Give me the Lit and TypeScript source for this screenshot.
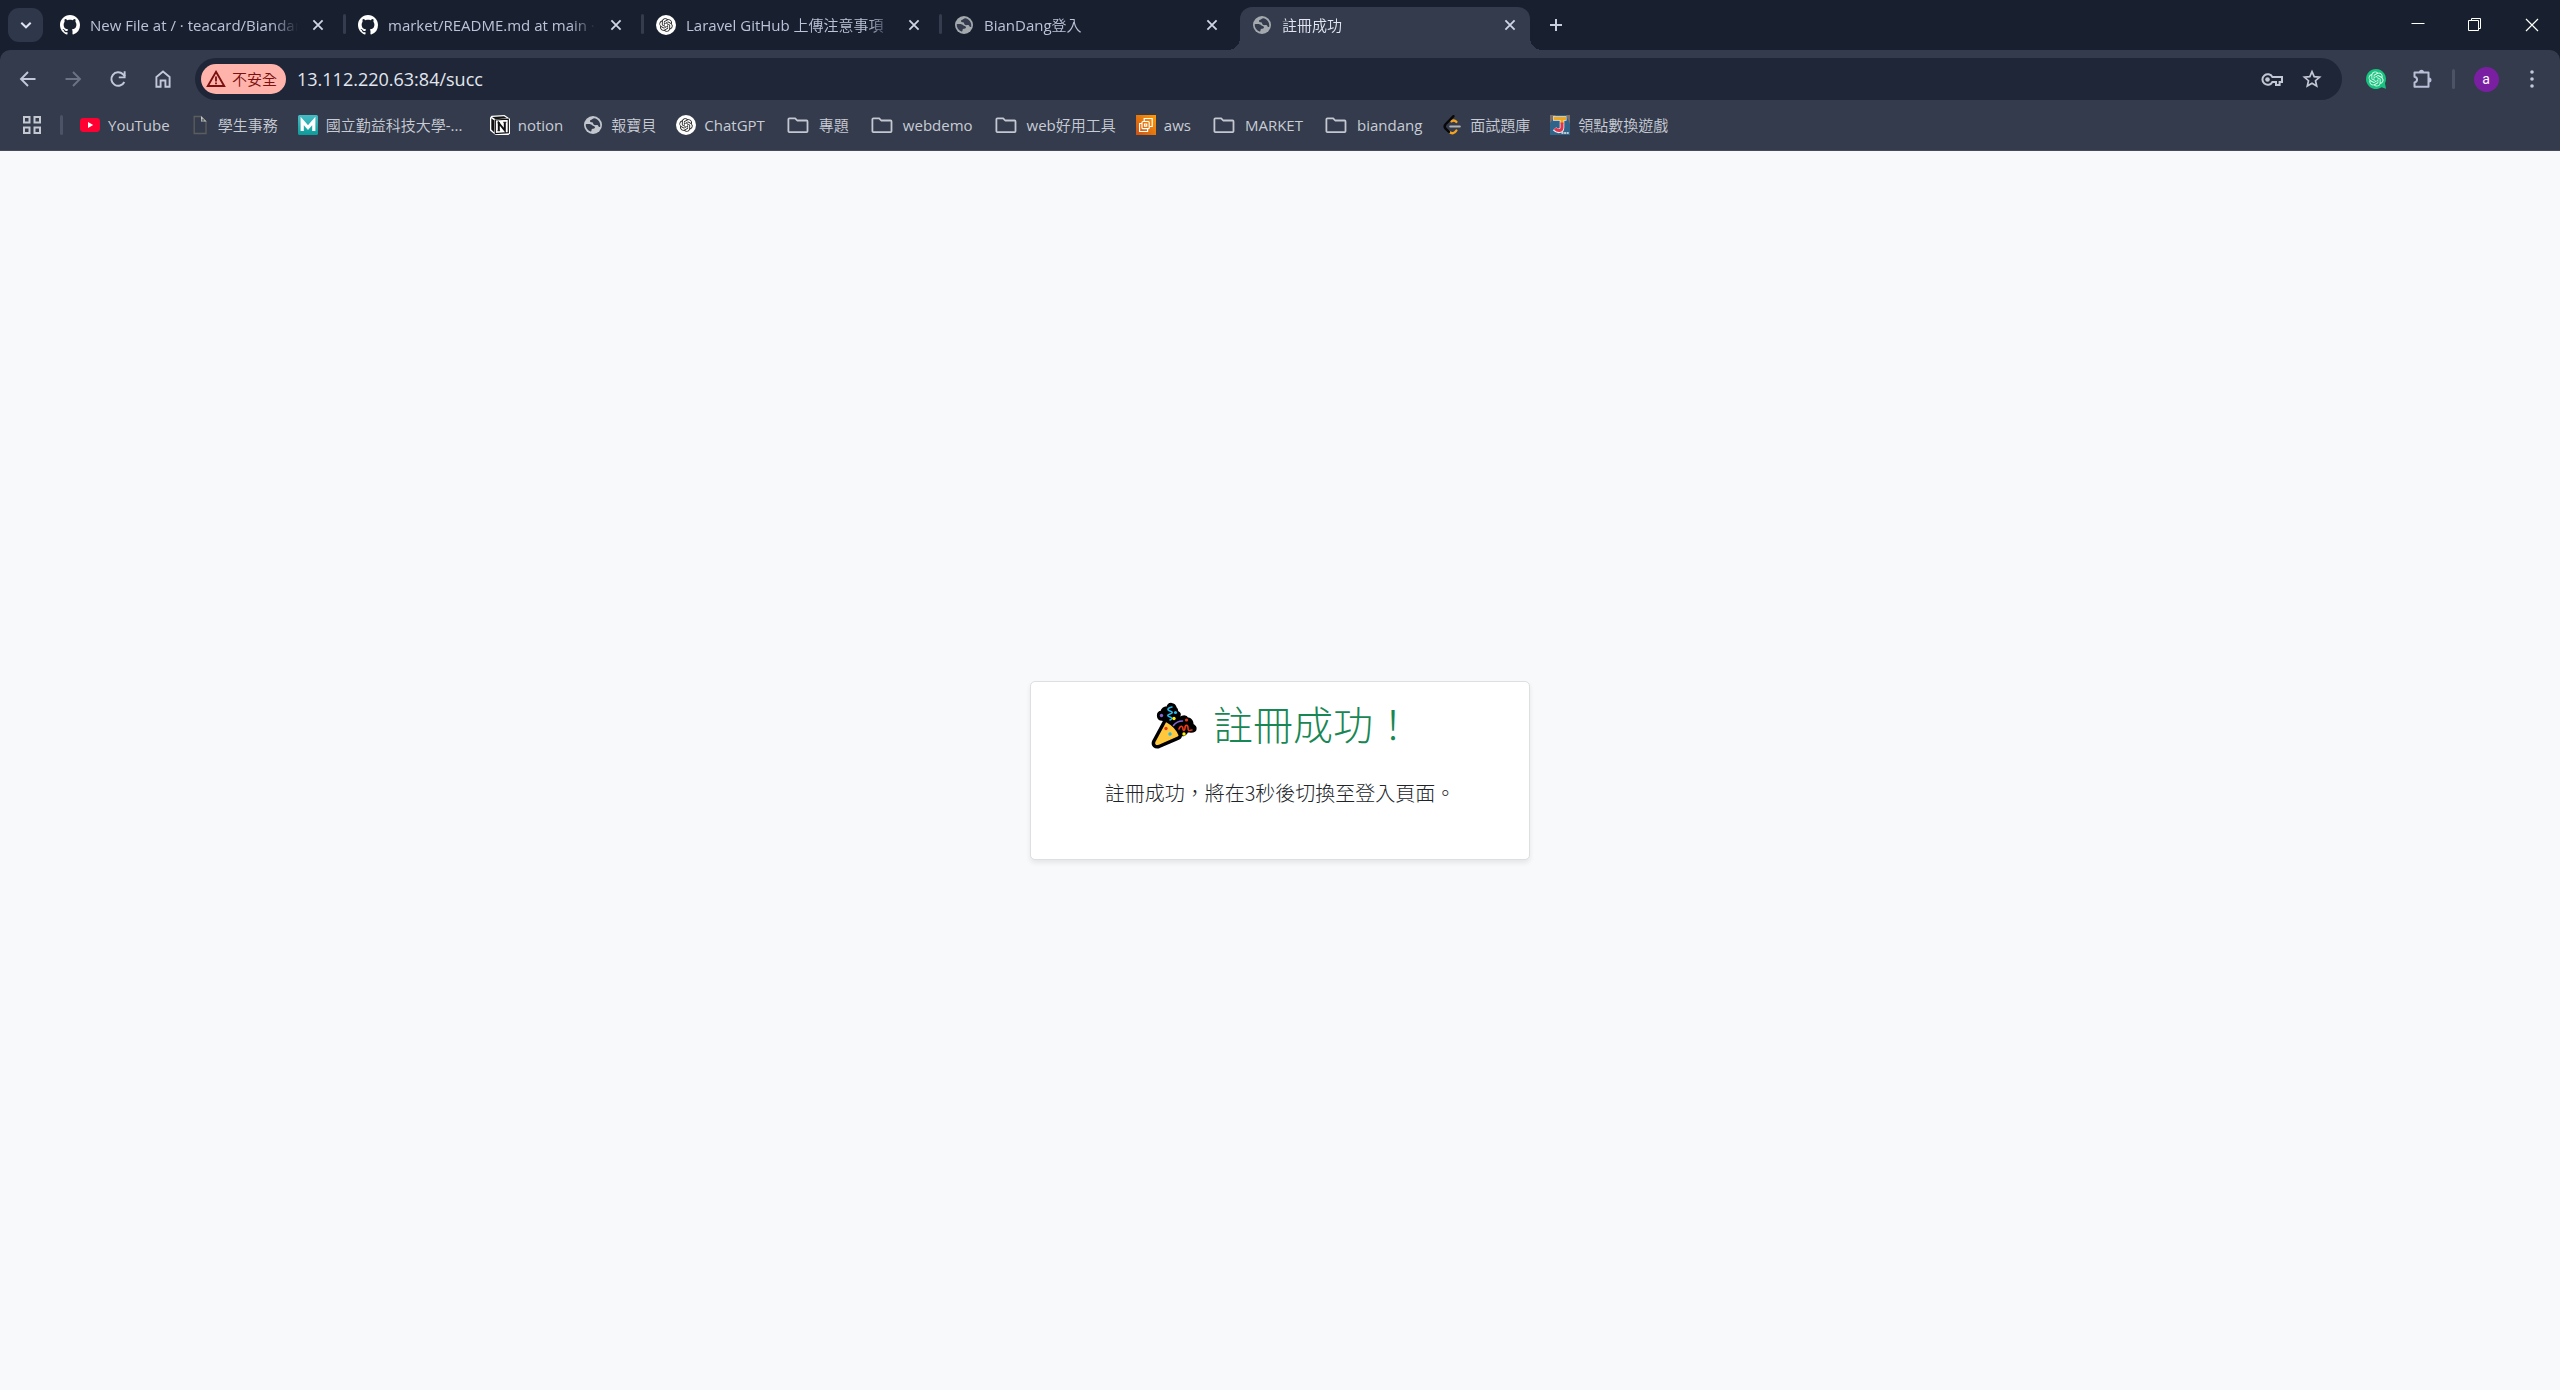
import { LitElement, html, svg, css } from "lit";
import { customElement, property } from "lit/decorators.js";

const OPENAI =
  "M22.2819 9.8211a5.9847 5.9847 0 0 0-.5157-4.9108 6.0462 6.0462 0 0 0-6.5098-2.9A6.0651 6.0651 0 0 0 4.9807 4.1818a5.9847 5.9847 0 0 0-3.9977 2.9 6.0462 6.0462 0 0 0 .7427 7.0966 5.98 5.98 0 0 0 .511 4.9107 6.051 6.051 0 0 0 6.5146 2.9001A5.9847 5.9847 0 0 0 13.2599 24a6.0557 6.0557 0 0 0 5.7718-4.2058 5.9894 5.9894 0 0 0 3.9977-2.9001 6.0557 6.0557 0 0 0-.7475-7.0729zm-9.022 12.6081a4.4755 4.4755 0 0 1-2.8764-1.0408l.1419-.0804 4.7783-2.7582a.7948.7948 0 0 0 .3927-.6813v-6.7369l2.02 1.1686a.071.071 0 0 1 .038.052v5.5826a4.504 4.504 0 0 1-4.4945 4.4944zm-9.6607-4.1254a4.4708 4.4708 0 0 1-.5346-3.0137l.142.0852 4.783 2.7582a.7712.7712 0 0 0 .7806 0l5.8428-3.3685v2.3324a.0804.0804 0 0 1-.0332.0615L9.74 19.9502a4.4992 4.4992 0 0 1-6.1408-1.6464zM2.3408 7.8956a4.485 4.485 0 0 1 2.3655-1.9728V11.6a.7664.7664 0 0 0 .3879.6765l5.8144 3.3543-2.0201 1.1685a.0757.0757 0 0 1-.071 0l-4.8303-2.7865A4.504 4.504 0 0 1 2.3408 7.872zm16.5963 3.8558L13.1038 8.364 15.1192 7.2a.0757.0757 0 0 1 .071 0l4.8303 2.7913a4.4944 4.4944 0 0 1-.6765 8.1042v-5.6772a.79.79 0 0 0-.407-.667zm2.0107-3.0231l-.142-.0852-4.7735-2.7818a.7759.7759 0 0 0-.7854 0L9.409 9.2297V6.8974a.0662.0662 0 0 1 .0284-.0615l4.8303-2.7866a4.4992 4.4992 0 0 1 6.6802 4.66zM8.3065 12.863l-2.02-1.1638a.0804.0804 0 0 1-.038-.0567V6.0742a4.4992 4.4992 0 0 1 7.3757-3.4537l-.142.0805L8.704 5.459a.7948.7948 0 0 0-.3927.6813zm1.0976-2.3654l2.602-1.4998 2.6069 1.4998v2.9994l-2.5974 1.4997-2.6067-1.4997Z";

const GITHUB =
  "M8 0C3.58 0 0 3.58 0 8c0 3.54 2.29 6.53 5.47 7.59.4.07.55-.17.55-.38 0-.19-.01-.82-.01-1.49-2.01.37-2.53-.49-2.69-.94-.09-.23-.48-.94-.82-1.13-.28-.15-.68-.52-.01-.53.63-.01 1.08.58 1.23.82.72 1.21 1.87.87 2.33.66.07-.52.28-.87.51-1.07-1.78-.2-3.64-.89-3.64-3.95 0-.87.31-1.59.82-2.15-.08-.2-.36-1.02.08-2.12 0 0 .67-.21 2.2.82.64-.18 1.32-.27 2-.27.68 0 1.36.09 2 .27 1.53-1.04 2.2-.82 2.2-.82.44 1.1.16 1.92.08 2.12.51.56.82 1.27.82 2.15 0 3.07-1.87 3.75-3.65 3.95.29.25.54.73.54 1.48 0 1.07-.01 1.93-.01 2.2 0 .21.15.46.55.38A8.013 8.013 0 0016 8c0-4.42-3.58-8-8-8z";

/* Every icon is drawn on a 20 x 20 grid. */
const ICONS: Record<string, unknown> = {
  github: svg`<path transform="scale(1.25)" fill="#fff" d=${GITHUB}/>`,
  openai: svg`<circle cx="10" cy="10" r="10" fill="#fff"/><path transform="translate(3.2 3.2) scale(.567)" fill="#222" d=${OPENAI}/>`,
  openaiGreen: svg`<path fill="#16c47f" d="M10 0a10 10 0 1 0 5.6 18.3l4.4 1.5-1-5.5A10 10 0 0 0 10 0z"/><path transform="translate(2.4 2.4) scale(.633)" fill="#d9f7ea" d=${OPENAI}/>`,
  globe: svg`<circle cx="10" cy="10" r="9" fill="currentColor"/><path fill="#333b4c" d="M11.6 3.2c-.9.1-1.7.4-2.5 1-.9.6-2 .7-2.1 1.700-.1.900.8 1.300 1.900 1.300 1.200.1 1.100.7 1.300 1.600.3 1.100 1.500 1.500 2.600 1.300 1.600-.3 2.300.2 2.600 1.100.3.700 1.200.9 1.800.5.600-3.900-1.500-7.300-5.600-8.500zM2.700 9.300c1.400-.3 3.600-.4 5.300.1 1.100.3 1.500 1.200 2.600 1.500 1 .3 1.600.9 1.300 1.900-.3.900-1.300 1-2.300 1-.9.1-1 .8-1.100 1.600-.1.700-.4 1.200-1.100 1.100-3.200-1.200-4.900-4-4.700-7.200z"/>`,
  youtube: svg`<rect y="3" width="20" height="14" rx="3.4" fill="#ff0033"/><path fill="#fff" d="M8 7v6l5.200-3z"/>`,
  file: svg`<path fill="none" stroke="#5c5d5c" stroke-width="1.3" d="M4.200 1.500h6.800l5 5v12H4.200z"/><path fill="#c6c8cc" d="M11 1l5.600 5.600H11z"/><path stroke="#5c5d5c" d="M13 3.500v3M11.500 5h3"/>`,
  m: svg`<defs><linearGradient id="g" x2="0" y2="1"><stop stop-color="#46bcc4"/><stop offset="1" stop-color="#0c9c9a"/></linearGradient></defs><rect width="20" height="20" rx="1.5" fill="url(#g)"/><path fill="none" stroke="#fff" stroke-width="3.2" d="M4.200 16V6l5.800 6.500L15.800 6v10"/>`,
  notion: svg`<path fill="#fff" d="M1.500.8 14.500 0 20 3.800v14.500L18.500 20l-13 .0L0 15.500V2.500z"/><path fill="#111" d="M2 2l12-.8 3 2L5.500 4.200zM1.300 3.200l3 2.200v12L1.300 14.500z"/><path fill="#fff" stroke="#111" stroke-width="1.2" d="M5.300 5l13-.8v13.400l-13 1z"/><path fill="none" stroke="#111" stroke-width="2" d="M8.800 15.500V8l6 7.500V7.500"/><path stroke="#111" d="M7.500 7.800h2.500M13.300 7.300h3M7.500 15.700h2.600"/>`,
  folder: svg`<path fill="none" stroke="#c5c7d1" stroke-width="1.8" stroke-linejoin="round" d="M.4 4.300c0-.6.4-1 1-1h5.800l2 2.200h9.400c.5 0 .9.400.9.900v9.800c0 .5-.4.900-.9.900H1.400c-.6 0-1-.4-1-.9z"/>`,
  aws: svg`<defs><linearGradient id="w" x1="0" y1="1" x2="1" y2="0"><stop stop-color="#cb5216"/><stop offset="1" stop-color="#ff9c05"/></linearGradient></defs><rect width="20" height="20" fill="url(#w)"/><g fill="none" stroke="#fff" stroke-width="1.2"><path d="M8.200 6V3.500h8V11.500h-2.500"/><rect x="6" y="6.500" width="7.200" height="7.200" rx="1"/><path d="M6 8.500H3.600v8h8V14"/><path d="M8.500 9h2.200v2.200H8.500z"/></g>`,
  leetcode: svg`<g fill="none" stroke-linecap="round"><path stroke="#f5a21d" stroke-width="2.4" d="M9.500 6.200c1.800-1.400 3.300-1 4.900.7M14.400 15.500c-1.600 2.800-4.600 3.600-7 1.400"/><path stroke="#080808" stroke-width="2.4" d="M11.500 1.200 3.600 9.200c-1.200 1.400-1.200 3.200 0 4.500l3.400 3.200"/><path stroke="#b3b3b3" stroke-width="2" d="M8.200 11.600h9.600"/></g>`,
  game: svg`<rect width="20" height="20" fill="#2f6389"/><path fill="#7a6f6c" d="M0 0h6L0 8zM16 0h4v9z"/><path fill="none" stroke="#e8edf2" stroke-width="4.6" d="M3 3.500h13.500M12 3v9.500c0 4-4.500 4.500-7.500 1.200"/><path fill="none" stroke="#f3a81c" stroke-width="3" d="M3.500 3.400H16M12 3v6"/><path fill="none" stroke="#e2344a" stroke-width="3" d="M12 7.500v5c0 3.500-4 4-7 1.200"/><path stroke="#e9eef2" stroke-width="1.5" stroke-dasharray="2 .6" d="M11.500 18h7.500"/>`,
  grid: svg`<g fill="none" stroke="#c5c7d1" stroke-width="2"><path d="M2 2h5.500v5.500H2zM12.500 2H18v5.500h-5.500zM2 12.500h5.500V18H2zM12.500 12.500H18V18h-5.500z"/></g>`,
  back: svg`<path fill="none" stroke="#c3c7da" stroke-width="1.9" d="M17.500 10H3.500M10 3 3 10l7 7"/>`,
  forward: svg`<path fill="none" stroke="#6c7385" stroke-width="1.9" d="M2.500 10h14M10 3l7 7-7 7"/>`,
  reload: svg`<path fill="none" stroke="#c3c7da" stroke-width="2" d="M16.300 13A6.800 6.800 0 1 1 15 5.200l2 2"/><path fill="#c3c7da" d="M17.600 2.300v7H10.800v-1.900h4.900V2.300z"/>`,
  home: svg`<path fill="none" stroke="#c3c7da" stroke-width="1.9" d="M3.400 8 10 2.600 16.600 8v9.800H12.400v-6.300H7.600v6.300H3.400z"/>`,
  warning: svg`<path fill="none" stroke="#7a1010" stroke-width="1.9" stroke-linejoin="miter" d="M10 2.800 18.200 17H1.800z"/><path fill="#7a1010" d="M9.100 7.500h1.800v5H9.100zM9.100 13.500h1.800v1.800H9.100z"/>`,
  key: svg`<g fill="none" stroke="#c3c7d3" stroke-width="2"><path d="M11.400 8A5.300 5.300 0 1 0 11.400 13H15v3h3.600v-3H21V8z"/></g><circle cx="6.500" cy="10.500" r="2.300" fill="#c3c7d3"/>`,
  star: svg`<path fill="none" stroke="#c3c7d3" stroke-width="1.7" d="m10 2.600 2.200 5 5.400.5-4.100 3.600 1.200 5.300-4.700-2.800L5.300 17l1.200-5.300L2.400 8.100l5.400-.5z"/>`,
  puzzle: svg`<path fill="none" stroke="#b9bfd6" stroke-width="2" stroke-linejoin="round" d="M2.500 3.500h14v14.200h-14v-4.200c3.400-.6 3.400-5.200 0-5.800z"/><path fill="#b9bfd6" d="M7 3.200a2.500 2.500 0 0 1 5 0zM17 8.500a2.500 2.500 0 0 1 0 5z"/>`,
  more: svg`<g fill="#c3c7da"><circle cx="10" cy="3" r="1.8"/><circle cx="10" cy="10" r="1.8"/><circle cx="10" cy="17" r="1.8"/></g>`,
  chevron: svg`<path fill="none" stroke="#dfe3f0" stroke-width="2" d="M5.300 7.700 10 12.300l4.700-4.600"/>`,
  close: svg`<path stroke="#d0d5e6" stroke-width="1.8" d="m5.400 5.400 9.200 9.200M14.600 5.400l-9.200 9.200"/>`,
  plus: svg`<path stroke="#c8cde0" stroke-width="2" d="M10 4v12M4 10h12"/>`,
  minimise: svg`<path stroke="#fff" d="M3.500 8.500h13"/>`,
  restore: svg`<path fill="none" stroke="#fff" d="M3.500 5.500h10v10h-10zM6.500 5.500v-2h9v10h-2"/>`,
  exit: svg`<path stroke="#fff" stroke-width="1.2" d="m4 4 12 12M16 4 4 16"/>`,
};

@customElement("ui-icon")
class UiIcon extends LitElement {
  static styles = css`
    :host { display: block; flex: none; width: 20px; height: 20px; }
    .icon { display: block; width: 100%; height: 100%; overflow: visible; }
  `;
  @property() name = "";
  render() {
    return html`<svg class="icon" viewBox="0 0 20 20" aria-hidden="true">${ICONS[this.name]}</svg>`;
  }
}

/* Chinese runs are weighted lighter than the Latin ones. */
const mixed = (text: string) =>
  text
    .split(/([\u3000-\u9fff\uff00-\uffef]+)/)
    .filter(Boolean)
    .map((run) => (/[\u3000-\u9fff]/.test(run) ? html`<span class="han">${run}</span>` : html`<span>${run}</span>`));

const TABS = [
  { icon: "github", title: "New File at / · teacard/Biandang" },
  { icon: "github", title: "market/README.md at main · teacard/market" },
  { icon: "openai", title: "Laravel GitHub 上傳注意事項" },
  { icon: "globe", title: "BianDang登入" },
  { icon: "globe", title: "註冊成功" },
];
const ACTIVE = 4;

const BOOKMARKS = [
  ["youtube", "YouTube"],
  ["file", "學生事務"],
  ["m", "國立勤益科技大學-..."],
  ["notion", "notion"],
  ["globe", "報寶貝"],
  ["openai", "ChatGPT"],
  ["folder", "專題"],
  ["folder", "webdemo"],
  ["folder", "web好用工具"],
  ["aws", "aws"],
  ["folder", "MARKET"],
  ["folder", "biandang"],
  ["leetcode", "面試題庫"],
  ["game", "領點數換遊戲"],
];

@customElement("app-root")
class AppRoot extends LitElement {
  static styles = css`
    :host {
      display: flex;
      flex-direction: column;
      min-height: 100vh;
      background: #f8f9fa;
      font-family: "Open Sans", "Noto Sans CJK TC", sans-serif;
      font-size: 15px;
      line-height: 20px;
    }
    * { box-sizing: border-box; }
    button, input {
      margin: 0;
      padding: 0;
      border: 0;
      background: none;
      color: inherit;
      font: inherit;
    }
    button { display: flex; align-items: center; justify-content: center; }
    a { color: inherit; text-decoration: none; }
    .han { font-family: "Noto Sans CJK TC", sans-serif; font-weight: 350; }

    .strip {
      display: flex;
      align-items: center;
      height: 50px;
      padding-left: 8px;
      background: #182030;
      color: #bcc3d8;
    }
    .search {
      width: 35px;
      height: 34px;
      border-radius: 11px;
      background: #2f384a;
    }
    .tabs { display: flex; align-self: flex-end; gap: 8px; margin-left: 5px; }
    .tab {
      position: relative;
      display: flex;
      align-items: center;
      gap: 10px;
      width: 290px;
      height: 43px;
      padding: 0 10px 7px 12px;
      border-radius: 12px 12px 0 0;
    }
    .tab ui-icon { color: #a4a9ae; }
    .tab.split::after {
      content: "";
      position: absolute;
      right: -8px;
      top: 7px;
      width: 3px;
      height: 20px;
      border-radius: 2px;
      background: #343c4e;
    }
    .tab.active { background: #333b4c; color: #e3e6f0; }
    .tab.active::before, .tab.active::after {
      content: "";
      position: absolute;
      bottom: 0;
      width: 12px;
      height: 12px;
    }
    .tab.active::before { right: 100%; background: radial-gradient(circle at 0 0, transparent 12px, #333b4c 12px); }
    .tab.active::after { left: 100%; background: radial-gradient(circle at 100% 0, transparent 12px, #333b4c 12px); }
    .title {
      flex: 1;
      min-width: 0;
      overflow: hidden;
      justify-content: flex-start;
      white-space: pre;
      mask-image: linear-gradient(to left, transparent, #000 26px);
    }
    .add { width: 36px; height: 36px; margin-left: 8px; }
    .window { display: flex; align-self: stretch; margin-left: auto; }
    .window button { width: 57px; }

    .frame { background: #182030; }
    .chrome { border-radius: 10px 10px 0 0; background: #333b4c; border-bottom: 1px solid #464b59; color: #c9ccd5; }
    .toolbar { display: flex; align-items: center; padding: 8px 5px 0; }
    .nav { display: flex; margin-right: 10px; }
    .nav button { width: 45px; height: 42px; }
    .address {
      flex: 1;
      display: flex;
      align-items: center;
      gap: 11px;
      height: 42px;
      padding: 0 15px 0 6px;
      border-radius: 21px;
      background: #1e2637;
    }
    .chip {
      gap: 6px;
      height: 30px;
      padding: 0 9px 0 5px;
      border-radius: 15px;
      background: #ffb3ab;
      color: #7a1010;
    }
    .url { flex: 1; min-width: 0; font-size: 18px; line-height: 24px; color: #e3e6ee; outline: 0; }
    .address .tool { width: 30px; height: 30px; }
    .tools { display: flex; align-items: center; margin-left: 11px; }
    .tools button { width: 46px; height: 42px; }
    .rule { flex: none; width: 3px; height: 20px; border-radius: 2px; background: #4c5366; }
    .tools .rule { margin: 0 8px 0 7px; }
    .avatar {
      width: 25px;
      height: 25px;
      border-radius: 50%;
      background: #7b1fa2;
      color: #fff;
      font-family: Roboto, sans-serif;
      font-size: 14px;
      line-height: 24px;
      text-align: center;
    }

    .bookmarks { display: flex; align-items: center; height: 50px; padding-left: 22px; }
    .bookmarks .rule { margin: 0 17px 0 18px; }
    .list { display: flex; gap: 20px; margin: 0; padding: 0; list-style: none; }
    .mark { display: flex; align-items: center; gap: 8px; white-space: pre; }
    .mark ui-icon { color: #c3c7cd; }
    .slot { display: flex; justify-content: center; width: 20px; }
    .slot.wide { width: 26px; }
    .label.elided { width: 144px; }

    .page { flex: 1; display: flex; align-items: center; justify-content: center; color: #212529; }
    .card {
      width: 500px;
      padding: 20px 20px 51px;
      border: 1px solid #dddfe1;
      border-radius: 5px;
      background: #fff;
      box-shadow: 0 3px 5px rgba(0, 0, 0, 0.08);
      text-align: center;
      font-family: "Noto Sans CJK TC", sans-serif;
      font-weight: 300;
    }
    .heading {
      display: flex;
      align-items: flex-start;
      justify-content: center;
      gap: 11px;
      height: 48px;
      margin: 0 0 28px;
      color: #198754;
      font-size: 40px;
      line-height: 42px;
      font-weight: 300;
    }
    .party { width: 55px; height: 50px; }
    .note { margin: 0; font-size: 20px; line-height: 30px; }
  `;

  private icon(name: string) {
    return html`<ui-icon name=${name}></ui-icon>`;
  }

  render() {
    return html`
      <header>
        <div class="strip">
          <button class="search" aria-label="搜尋分頁">${this.icon("chevron")}</button>
          <div class="tabs">
            ${TABS.map(
              (t, i) => html`
                <div class="tab ${i === ACTIVE ? "active" : i < ACTIVE - 1 ? "split" : ""}">
                  ${this.icon(t.icon)}
                  <button class="title">${mixed(t.title)}</button>
                  <button aria-label="關閉">${this.icon("close")}</button>
                </div>
              `,
            )}
          </div>
          <button class="add" aria-label="新增分頁">${this.icon("plus")}</button>
          <div class="window">
            <button aria-label="最小化">${this.icon("minimise")}</button>
            <button aria-label="還原">${this.icon("restore")}</button>
            <button aria-label="關閉視窗">${this.icon("exit")}</button>
          </div>
        </div>
        <div class="frame">
          <div class="chrome">
            <div class="toolbar">
              <nav class="nav">
                <button aria-label="上一頁">${this.icon("back")}</button>
                <button aria-label="下一頁" disabled>${this.icon("forward")}</button>
                <button aria-label="重新載入">${this.icon("reload")}</button>
                <button aria-label="首頁">${this.icon("home")}</button>
              </nav>
              <div class="address">
                <button class="chip">${this.icon("warning")}<span class="han">不安全</span></button>
                <input class="url" aria-label="網址" value="13.112.220.63:84/succ" />
                <button class="tool" aria-label="密碼">${this.icon("key")}</button>
                <button class="tool" aria-label="加入書籤">${this.icon("star")}</button>
              </div>
              <div class="tools">
                <button aria-label="ChatGPT">${this.icon("openaiGreen")}</button>
                <button aria-label="擴充功能">${this.icon("puzzle")}</button>
                <span class="rule"></span>
                <button aria-label="個人資料"><span class="avatar">a</span></button>
                <button aria-label="選單">${this.icon("more")}</button>
              </div>
            </div>
            <nav class="bookmarks">
              <button aria-label="應用程式">${this.icon("grid")}</button>
              <span class="rule"></span>
              <ul class="list">
                ${BOOKMARKS.map(
                  ([icon, label]) => html`
                    <li>
                      <a class="mark" href="#"
                        ><span class="slot ${icon === "folder" ? "wide" : ""}">${this.icon(icon)}</span
                        ><span class="label ${label.endsWith("...") ? "elided" : ""}">${mixed(label)}</span></a
                      >
                    </li>
                  `,
                )}
              </ul>
            </nav>
          </div>
        </div>
      </header>
      <main class="page" lang="zh-TW">
        <section class="card">
          <h1 class="heading">
            <svg class="party" viewBox="0 0 55 48" role="img" aria-label="🎉">
              <g stroke="#000" stroke-width="3.5" stroke-linejoin="round">
                <path fill="#000" d="M20 17l-5-1c-4 0-5-6 0-7 1-4 5-4 6-4 1-5 6-4 7 0 3 3 0 4 3 5 2 1 1 3-1 5l-2 2 2 1c3-3 8-6 10-2 4 0 5 4 5 6 4 2 4 6-1 6l-5-1c1 4-4 6-6 3l-4-3z"/>
                <path fill="#ffc83d" d="M17.5 18.5c1-1.300 2.500-1.300 3.800 0 5.500 3 9.500 7.500 12 13.500 0 1.500-.3 2.500-2 3.200L12 43.500c-4 1-6.500-1.500-5.300-5z"/>
              </g>
              <g fill="none" stroke-width="1.6" stroke-linecap="round">
                <path stroke="#26b9e8" d="M25 4c-5 1-5 3-2 4s3 2 0 3-3 2 0 3 2 2 0 3"/>
                <path stroke="#8764d8" d="M26.5 22.5c3-4 7-4.500 9-4.500"/>
                <path stroke="#f03a17" d="M32 26c2-5 4-2 4 0s2 2 2-1 3-4 3 0 2 2 4 2"/>
              </g>
              <circle cx="14.5" cy="12.5" r="1.7" fill="#8764d8"/>
              <circle cx="28.5" cy="9.5" r="1.6" fill="#26b9e8"/>
              <circle cx="27" cy="15.5" r="1.7" fill="#fff100"/>
              <circle cx="39.5" cy="17" r="1.6" fill="#f03a17"/>
              <circle cx="37" cy="31" r="1.7" fill="#fff100"/>
              <circle cx="19" cy="25.5" r="1.7" fill="#f03a17"/>
              <circle cx="23" cy="31" r="1.7" fill="#26b9e8"/>
            </svg>
            <span>註冊成功！</span>
          </h1>
          <p class="note">註冊成功，將在3秒後切換至登入頁面。</p>
        </section>
      </main>
    `;
  }
}
